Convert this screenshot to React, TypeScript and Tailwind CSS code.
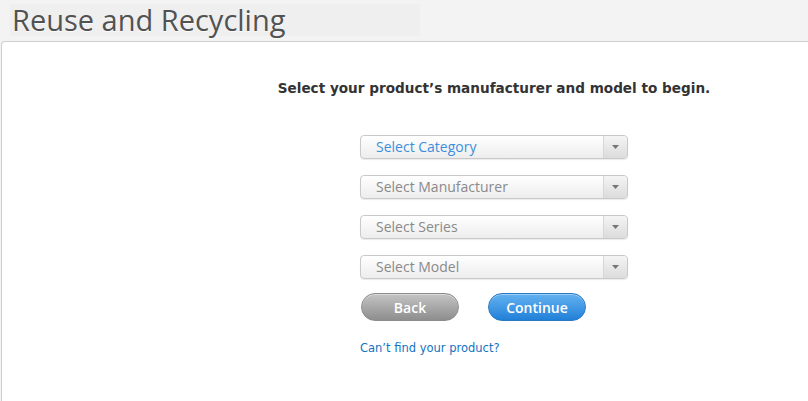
import React from "react";

const selects = [
    { label: "Select Category", active: true },
    { label: "Select Manufacturer", active: false },
    { label: "Select Series", active: false },
    { label: "Select Model", active: false },
];

function SelectBox({ label, active }: { label: string; active: boolean }) {
    return (
        <div className="flex h-[24px] w-[268px] rounded-[4px] border border-[#c9c9c9] bg-gradient-to-b from-white to-[#ededed] shadow-[0_1px_1px_rgba(0,0,0,0.08)]">
            <div
                className={`flex flex-1 items-center pb-[1px] pl-[15px] text-[14px] ${
                    active ? "text-[#3d8fdc]" : "text-[#8a8a8a]"
                }`}
                style={{ fontFamily: '"Open Sans", sans-serif' }}
            >
                {label}
            </div>
            <div className="flex w-[24px] items-center justify-center rounded-r-[4px] border-l border-[#d6d6d6] bg-gradient-to-b from-[#f4f4f4] to-[#dcdcdc]">
                <svg width="7" height="4" viewBox="0 0 7 4">
                    <path d="M0 0h7L3.5 4z" fill="#777" />
                </svg>
            </div>
        </div>
    );
}

export default function App() {
    return (
        <div className="h-[401px] w-[808px] overflow-hidden bg-[#f3f3f4]">
            <div className="flex h-[41px] items-start pl-[10px] pt-[4px]">
                <div className="flex h-[32px] w-[410px] items-center bg-[#efefef] pl-[2px]">
                    <h1
                        className="text-[29px] font-medium leading-[32px] text-[#525252] [text-shadow:0_1px_0_rgba(255,255,255,0.8)]"
                        style={{ fontFamily: '"Open Sans", sans-serif' }}
                    >
                        Reuse and Recycling
                    </h1>
                </div>
            </div>
            <div className="ml-[1px] h-[360px] w-[985px] rounded-tl-[4px] border-l border-t border-[#cfcfcf] bg-white">
                <div className="flex flex-col items-center pt-[36px]">
                    <p
                        className="text-[13.6px] font-bold text-[#333]"
                        style={{ fontFamily: '"DejaVu Sans", sans-serif' }}
                    >
                        Select your product’s manufacturer and model to begin.
                    </p>
                    <div className="mt-[37px] flex w-[268px] flex-col gap-[16px]">
                        {selects.map((s) => (
                            <SelectBox key={s.label} label={s.label} active={s.active} />
                        ))}
                        <div
                            className="-mt-[2px] flex gap-[29px] pl-[1px] text-[14px] font-semibold text-white"
                            style={{ fontFamily: '"Open Sans", sans-serif' }}
                        >
                            <button className="h-[28px] w-[98px] rounded-full border border-[#8c8c8c] bg-gradient-to-b from-[#c4c4c4] to-[#8e8e8e] shadow-[inset_0_1px_0_rgba(255,255,255,0.4)]">
                                Back
                            </button>
                            <button className="h-[28px] w-[98px] rounded-full border border-[#2a78c2] bg-gradient-to-b from-[#62b2f1] to-[#1f80d8] shadow-[inset_0_1px_0_rgba(255,255,255,0.4)]">
                                Continue
                            </button>
                        </div>
                        <a
                            href="#"
                            className="mt-[3px] text-[11.5px] text-[#1273c2]"
                            style={{ fontFamily: '"DejaVu Sans", sans-serif' }}
                        >
                            Can’t find your product?
                        </a>
                    </div>
                </div>
            </div>
        </div>
    );
}
